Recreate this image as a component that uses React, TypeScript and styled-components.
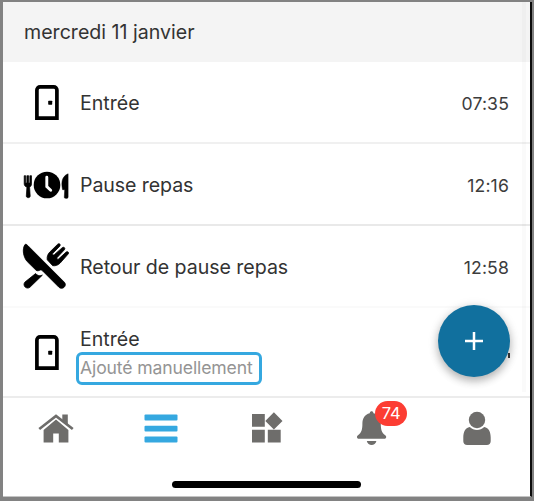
import React from "react";
import styled, { createGlobalStyle } from "styled-components";

const GlobalStyle = createGlobalStyle`
  * { box-sizing: border-box; }
  body { margin: 0; background: #828282; font-family: Inter, "Liberation Sans", sans-serif; }
`;

const Frame = styled.div`
  width: 534px;
  height: 501px;
  padding: 2px 2px 4px 3px;
  background: #828282;
`;

const Screen = styled.div`
  position: relative;
  width: 529px;
  height: 495px;
  display: flex;
  flex-direction: column;
  background: #fff;
  border-right: 2px solid #0c0c0c;
  border-bottom: 1px solid #c4c4c4;
  overflow: hidden;
`;

const ScrollTrack = styled.div`
  position: absolute;
  top: 0;
  left: 519px;
  width: 4px;
  height: 390px;
  background: rgba(0, 0, 0, 0.018);
`;

const Label = styled.span<{ $spacing?: number }>`
  font-size: 19.6px;
  line-height: 26px;
  letter-spacing: ${(p) => p.$spacing ?? 0}px;
  color: #333;
  white-space: nowrap;
`;

const DateHeader = styled.header`
  height: 60px;
  flex: none;
  display: flex;
  align-items: center;
  padding-left: 21px;
  background: #f4f4f4;
`;

const Entry = styled.div<{ $height: number; $line?: string }>`
  height: ${(p) => p.$height}px;
  flex: none;
  display: flex;
  align-items: center;
  padding: 2px 21px 0 19px;
  border-bottom: 2px solid ${(p) => p.$line ?? "#f0f0f0"};
`;

const EntryIcon = styled.svg`
  width: 48px;
  height: 48px;
  flex: none;
  margin-right: 10px;
`;

const EntryText = styled.div<{ $offset?: number }>`
  flex: 1;
  display: flex;
  flex-direction: column;
  align-items: flex-start;
  padding-top: ${(p) => p.$offset ?? 0}px;
`;

const Time = styled.time`
  font-size: 17.6px;
  letter-spacing: 0.15px;
  color: #3c3c3c;
`;

const Note = styled.div`
  width: 186px;
  height: 33px;
  margin: 0 0 0 -4px;
  padding-left: 1px;
  border: 3px solid #35a8e0;
  border-radius: 6px;
  font-size: 17.6px;
  line-height: 25px;
  letter-spacing: -0.13px;
  color: #949494;
  white-space: nowrap;
`;

const AddButton = styled.button`
  position: absolute;
  left: 435px;
  top: 303px;
  width: 72px;
  height: 72px;
  padding: 0;
  display: flex;
  align-items: center;
  justify-content: center;
  border: 0;
  border-radius: 50%;
  background: #11709e;
  box-shadow: 0 4px 8px rgba(0, 0, 0, 0.24), 0 2px 12px rgba(0, 0, 0, 0.12);
`;

const HiddenTime = styled.span`
  position: absolute;
  left: 505px;
  top: 351px;
  width: 2px;
  height: 5px;
  background: #3c3c3c;
`;

const TabBar = styled.nav`
  flex: 1;
  display: flex;
  align-items: flex-start;
  padding-top: 6px;
`;

const Tab = styled.div`
  position: relative;
  flex: 1;
  height: 50px;
  display: flex;
  align-items: center;
  justify-content: center;
  color: #6e6d6b;
`;

const TabIcon = styled.svg`
  width: 40px;
  height: 40px;
`;

const Badge = styled.span`
  position: absolute;
  left: 56px;
  top: -3px;
  width: 32px;
  height: 25px;
  border-radius: 13px;
  background: #fc3d33;
  color: #fff;
  font-size: 16.5px;
  line-height: 25px;
  text-align: center;
`;

const HomeIndicator = styled.div`
  position: absolute;
  left: 169px;
  bottom: 8px;
  width: 189px;
  height: 7px;
  border-radius: 4px;
  background: #000;
`;

const DoorIcon = () => (
  <EntryIcon viewBox="0 0 48 48">
    <path d="M14.9 39.2V11a3.2 3.2 0 0 1 3.2-3.2h13.600a3.200 3.200 0 0 1 3.200 3.200v28.200z" fill="none" stroke="#000" strokeWidth="3.700" />
    <rect x="26.200" y="21.700" width="4" height="4" rx="0.600" />
  </EntryIcon>
);

const MealIcon = () => (
  <EntryIcon viewBox="0 0 48 48">
    <path d="M2.200 14.700h1.500v7.200h1.200v-7.200h1.800v7.200h1.200v-7.200h1.600v8.200c0 1.600-.8 2.600-1.900 3.200l.6 9c.1 2.100-4 2.100-3.900 0l.6-9C3.300 25.500 2.200 24.500 2.200 22.900z" stroke="#000" strokeWidth=".7" />
    <circle cx="25" cy="24" r="13.300" />
    <path d="M24.800 16.200v9.400l3.900 3.700" fill="none" stroke="#fff" strokeWidth="2.900" strokeLinecap="round" />
    <path d="M46.100 12.800v23.400c0 1.600-3.900 1.600-3.800 0l.4-7.500h-2.100c-1.100-5.500-1.800-12.900 5.500-15.900z" stroke="#000" strokeWidth=".5" />
  </EntryIcon>
);

const CutleryIcon = () => (
  <EntryIcon viewBox="0.500 0.500 46 46" stroke="#000" strokeWidth=".8" strokeLinejoin="round">
    <path d="M3.200 2.200C.5 6.500 1.800 14.200 5.500 18.300L14 26.600c1.200 1 2.600.4 3.900-.2 1-.4 1.700.2 2.400.9l15.600 15.600c3.200 3.200 8.200-1.500 5.200-4.800L6 2.900C4.900 1.800 4 1.300 3.200 2.200z" />
    <path d="M13.500 29.800c2.700 2.700 4.800 2.100 6.500 1.500L8.300 42.700c-3.300 3-7.900-1.500-4.900-4.800z" />
    <path d="M24.700 16.600c-.5-3 .5-5.400 2.400-7.400l7.700-7.600c1.500-1.200 3.100.4 1.900 1.900l-6.700 6.900c-.8 1 .5 2.200 1.500 1.300l7.600-6.700c1.600-1.200 3.200.5 2 2l-6.900 7.400c-.8 1 .4 2.200 1.400 1.400l7.200-6.600c1.500-1.100 3.100.5 1.900 1.900l-7.600 8.600c-2.100 2.100-4.500 3-7.200 2.500z" />
  </EntryIcon>
);

const HomeIcon = () => (
  <TabIcon viewBox="0 0 40 40" fill="currentColor">
    <path d="M7.600 33.500V21L20 10.600 32.400 21v12.500h-9.600v-9h-5.600v9z" />
    <path d="M4.300 20.500 20 7.200l15.700 13.300" fill="none" stroke="#fff" strokeWidth="3.800" />
    <path d="M4.300 19.200 20 6.900l15.700 12.300" fill="none" stroke="currentColor" strokeWidth="2.700" strokeLinecap="square" strokeLinejoin="miter" />
    <path d="M26.300 5.500h5.500v11.200l-5.500-4.600z" />
  </TabIcon>
);

const ListIcon = () => (
  <TabIcon viewBox="0 0 40 40" fill="#35a8e0">
    <rect x="3.500" y="5.600" width="33" height="6" rx="1" />
    <rect x="3.500" y="16.700" width="33" height="5.800" rx="1" />
    <rect x="3.500" y="27.600" width="33" height="6" rx="1" />
  </TabIcon>
);

const WidgetsIcon = () => (
  <TabIcon viewBox="0 0 40 40" fill="currentColor">
    <path d="M5 4.900h12.800v12.900H5zM5 20.800h12.800v12.700H5zM20.800 20.800h12.900v12.700H20.800zM26.900 3.200l8.600 8.700-8.600 8.700-8.600-8.700z" />
  </TabIcon>
);

const BellIcon = () => (
  <TabIcon viewBox="0 0 40 40" fill="currentColor">
    <path d="M17.700 4.300c.5-2.600 3.300-2.600 3.800 0 5.100 1.300 7.300 5.500 7.300 10.200 0 6 .9 9.300 4.400 11.700 1.800 1.300 1 3.600-1 3.600H7c-2 0-2.800-2.300-1-3.600 3.500-2.400 4.400-5.700 4.400-11.700 0-4.700 2.200-8.900 7.300-10.200z" />
    <path d="M14.800 31.900h9.600c-1.100 5.500-8.500 5.500-9.600 0z" />
  </TabIcon>
);

const PersonIcon = () => (
  <TabIcon viewBox="0 0 40 40" fill="currentColor">
    <path d="M12.800 18.100c4 3.900 10.400 3.900 14.400 0 4.700.9 6.500 5.100 6.500 10.400v3.700c0 2.200-1.600 3.700-3.800 3.700H10.100c-2.200 0-3.800-1.500-3.800-3.700v-3.700c0-5.300 1.800-9.500 6.500-10.400z" />
    <circle cx="20" cy="11" r="8.200" />
  </TabIcon>
);

export default function App() {
  return (
    <>
      <GlobalStyle />
      <Frame>
        <Screen>
          <DateHeader>
            <Label>mercredi 11 janvier</Label>
          </DateHeader>
          <Entry $height={82}>
            <DoorIcon />
            <EntryText><Label>Entrée</Label></EntryText>
            <Time>07:35</Time>
          </Entry>
          <Entry $height={82} $line="#e9e9e9">
            <MealIcon />
            <EntryText><Label $spacing={-0.1}>Pause repas</Label></EntryText>
            <Time>12:16</Time>
          </Entry>
          <Entry $height={82} $line="#fafafa">
            <CutleryIcon />
            <EntryText><Label $spacing={-0.05}>Retour de pause repas</Label></EntryText>
            <Time>12:58</Time>
          </Entry>
          <Entry $height={90} $line="#ececec">
            <DoorIcon />
            <EntryText $offset={4}>
              <Label>Entrée</Label>
              <Note>Ajouté manuellement</Note>
            </EntryText>
          </Entry>
          <TabBar>
            <Tab><HomeIcon /></Tab>
            <Tab><ListIcon /></Tab>
            <Tab><WidgetsIcon /></Tab>
            <Tab><BellIcon /><Badge>74</Badge></Tab>
            <Tab><PersonIcon /></Tab>
          </TabBar>
          <ScrollTrack />
          <HiddenTime />
          <AddButton aria-label="+">
            <svg width="20" height="20" viewBox="0 0 20 20">
              <path d="M1 10h18M10 1v18" stroke="#fff" strokeWidth="2.500" />
            </svg>
          </AddButton>
          <HomeIndicator />
        </Screen>
      </Frame>
    </>
  );
}
